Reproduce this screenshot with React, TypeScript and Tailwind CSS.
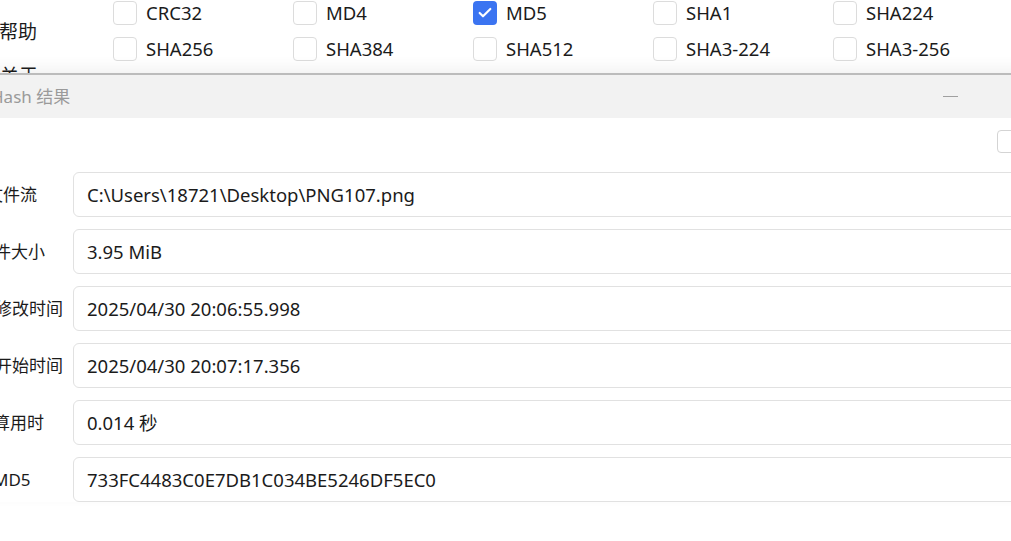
import { Check } from "lucide-react";

const algos = [
  ["CRC32", "MD4", "MD5", "SHA1", "SHA224"],
  ["SHA256", "SHA384", "SHA512", "SHA3-224", "SHA3-256"],
  ["SHA3-384", "SHA3-512", "BLAKE2b", "BLAKE2s", "SM3"],
];

const rows = [
  { label: "文件流", value: "C:\\Users\\18721\\Desktop\\PNG107.png", pad: "pl-[26px]" },
  { label: "文件大小", value: "3.95 MiB", pad: "pl-[17px]" },
  { label: "修改时间", value: "2025/04/30 20:06:55.998", pad: "pl-[35px]" },
  { label: "开始时间", value: "2025/04/30 20:07:17.356", pad: "pl-[35px]" },
  { label: "计算用时", value: "0.014 秒", pad: "pl-[16px]" },
  { label: "MD5", value: "733FC4483C0E7DB1C034BE5246DF5EC0", pad: "pl-[33px]" },
];

function Box({ checked }: { checked?: boolean }) {
  if (checked)
    return (
      <span className="flex h-6 w-6 shrink-0 items-center justify-center rounded-[4px] bg-[#3b74f1]">
        <Check className="h-4 w-4 text-white" strokeWidth={3.2} />
      </span>
    );
  return <span className="h-6 w-6 shrink-0 rounded-[4px] border border-[#dcdcdc] bg-white" />;
}

export default function App() {
  return (
    <div className="relative h-[541px] w-[1011px] overflow-hidden bg-white font-['Noto_Sans','Noto_Sans_CJK_SC',sans-serif] text-[#1b1b1b]">
      {/* 背景窗口 */}
      <div className="flex">
        <div className="flex w-[113px] shrink-0 flex-col pt-[20px] text-[19px] leading-6">
          <span className="-ml-[1px]">帮助</span>
          <span className="mt-[20px]">关于</span>
        </div>
        <div className="flex flex-col gap-3 pt-[1px]">
          {algos.map((r, i) => (
            <div key={i} className="flex">
              {r.map((a) => (
                <label key={a} className="flex w-[180px] shrink-0 items-center gap-[9px] text-[18.5px] leading-6">
                  <Box checked={a === "MD5"} />
                  {a}
                </label>
              ))}
            </div>
          ))}
        </div>
      </div>

      {/* Hash 结果 */}
      <div className="absolute left-[-40px] top-[73px] w-[1100px] border-t-[2px] border-[#bcbcbc] bg-white shadow-[0_-6px_14px_rgba(0,0,0,0.05)]">
        <div className="flex h-[43px] items-center justify-between bg-[#f2f2f2] pl-[31px] pr-[102px] text-[17px] leading-6 text-[#9a9a9a]">
          <span>Hash 结果</span>
          <span className="h-px w-[15px] bg-[#a0a0a0]" />
        </div>
        <div className="flex justify-end pr-[40px] pt-[12px]">
          <span className="h-[23px] w-[23px] rounded-[4px] border border-[#d4d4d4]" />
        </div>
        <div className="mt-[19px] flex flex-col gap-3">
          {rows.map((r) => (
            <div key={r.label} className="flex items-center">
              <div className={`w-[113px] shrink-0 whitespace-nowrap text-[17px] leading-6 ${r.pad}`}>{r.label}</div>
              <div className="mr-[20px] flex h-[45px] flex-1 items-center rounded-[6px] border border-[#e1e1e1] px-[13px] text-[18.5px] leading-6">
                {r.value}
              </div>
            </div>
          ))}
        </div>
      </div>
    </div>
  );
}
